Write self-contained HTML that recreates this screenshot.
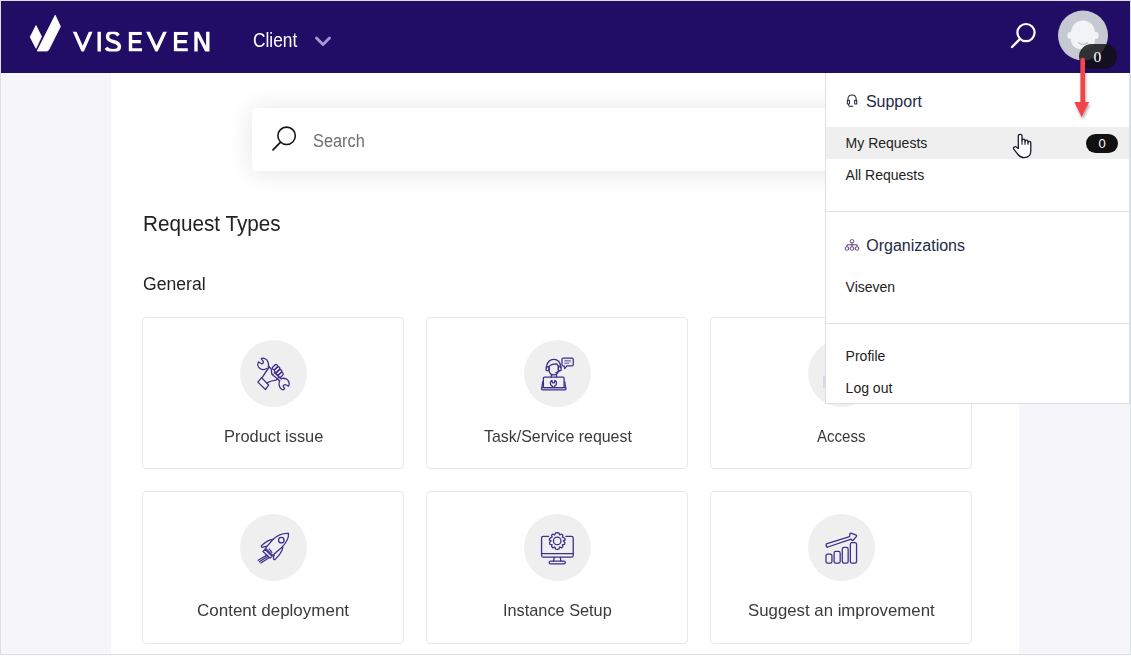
<!DOCTYPE html>
<html><head><meta charset="utf-8">
<style>
*{box-sizing:border-box;margin:0;padding:0}
html,body{width:1131px;height:657px;overflow:hidden;background:#fff;font-family:"Liberation Sans",sans-serif}
.a{position:absolute}
.t{position:absolute;white-space:nowrap;transform-origin:0 0}
#frame{position:absolute;left:0;top:0;width:1131px;height:655px;background:#f5f5fa;overflow:hidden}
#border{position:absolute;left:0;top:0;width:1131px;height:655px;border:1px solid #dcdfe4}
#header{position:absolute;left:1px;top:1px;width:1129px;height:72px;background:#210c66}
#main{position:absolute;left:111px;top:73px;width:908px;height:581px;background:#fff}
.card{position:absolute;width:262px;height:152px;border:1px solid #e8e8e8;border-radius:4px;background:#fff}
.circ{position:absolute;width:67px;height:67px;border-radius:50%;background:#efefef}
.ico{position:absolute;width:40px;height:40px}
.ico *{fill:none;stroke:#402e8c;stroke-width:21;stroke-linecap:round;stroke-linejoin:round}
.lbl{font-size:16.6px;line-height:16.6px;color:#3a3a3a}
.dt{font-size:14px;line-height:14px;color:#222}
.dh{font-size:16px;line-height:16px;color:#1e2a48}
#dd{position:absolute;left:825px;top:73px;width:305px;height:331px;background:#fff;border:1px solid #dddfe2;border-top:none}
.hr{position:absolute;left:826px;width:303px;height:1px;background:#e0e0e4}
</style></head>
<body>
<div id="frame">
  <div id="header"></div>
  <!-- logo -->
  <svg class="a" style="left:0;top:0" width="230" height="72" viewBox="0 0 230 72">
    <path d="M30.2 37 L36 25.6 L41.5 36.6 L36 48.3 Z" fill="#fff" stroke="#fff" stroke-width="0.8" stroke-linejoin="round"/>
    <path d="M37.2 51 L55.2 15.2 L60.4 26.5 L48.6 50 Q48 51 46.6 51 Z" fill="#fff" stroke="#fff" stroke-width="0.8" stroke-linejoin="round"/>
    <defs><clipPath id="lc"><rect x="60" y="31.7" width="160" height="19.9"/></clipPath></defs>
    <g fill="none" stroke="#fff" stroke-width="3.4" clip-path="url(#lc)" stroke-miterlimit="10">
      <path d="M72.6 27 L82.7 50 L92.8 27"/>
      <path d="M99.2 28 L99.2 55"/>
      <path d="M118.6 35.4 Q116 32.4 112.6 32.4 Q107.6 32.4 107.6 36.8 Q107.6 40.2 113 41.5 Q119.4 43 119.4 46.6 Q119.4 50.8 113 50.8 Q108.6 50.8 105.9 47.8"/>
      <path d="M141.8 33.4 L130.5 33.4 L130.5 49.9 L142 49.9 M130.5 41.6 L140.8 41.6"/>
      <path d="M145.8 27 L156.5 50 L167.2 27"/>
      <path d="M187.8 33.4 L175.6 33.4 L175.6 49.9 L187.8 49.9 M175.6 41.6 L186.8 41.6"/>
      <path d="M196 56 L196 30 L207.8 53 L207.8 28"/>
    </g>
  </svg>
  <div class="t" style="left:252.7px;top:31.2px;font-size:19.4px;line-height:19.4px;color:#fff;transform:scaleX(.893)">Client</div>
  <svg class="a" style="left:313px;top:33.6px" width="20" height="15" viewBox="0 0 20 15"><path d="M3.5 4 L10 10.5 L16.5 4" fill="none" stroke="#a398cf" stroke-width="3" stroke-linecap="round" stroke-linejoin="round"/></svg>
  <!-- search icon -->
  <svg class="a" style="left:1005px;top:17px" width="35" height="35" viewBox="0 0 35 35"><circle cx="21" cy="15.6" r="8.6" fill="none" stroke="#fff" stroke-width="2.2"/><path d="M15 22 L7 30" stroke="#fff" stroke-width="2.4" stroke-linecap="round"/></svg>
  <!-- avatar -->
  <svg class="a" style="left:1056px;top:9px" width="54" height="54" viewBox="0 0 54 54">
    <circle cx="27" cy="26.5" r="25" fill="#c6c9d2"/>
    <path d="M14.8 25 C14.8 16.5 20.2 11.4 27 11.4 C33.8 11.4 39.2 16.5 39.2 25 L39.2 30 C39.2 36.5 34 40.5 27 40.5 C20 40.5 14.8 36.5 14.8 30 Z" fill="#f2f3f6"/>
    <ellipse cx="14.2" cy="26.4" rx="2.8" ry="3.4" fill="#f2f3f6"/><ellipse cx="39.8" cy="26.4" rx="2.8" ry="3.4" fill="#f2f3f6"/>
    <path d="M22.6 33.6 Q27 37 31.6 33.6" fill="none" stroke="#c6c9d2" stroke-width="1.5" stroke-linecap="round"/>
  </svg>
  <div class="a" style="left:1079px;top:44px;width:38px;height:25px;border-radius:12.5px;background:rgba(16,16,18,0.82)"></div>
  <div class="t" style="left:1093.6px;top:48.6px;font-family:'Liberation Serif',serif;font-size:15.6px;line-height:16px;color:#fff">0</div>

  <div id="main"></div>
  <!-- search -->
  <div class="a" style="left:252px;top:108px;width:626px;height:63px;background:#fff;border-radius:4px;box-shadow:0 1px 26px rgba(0,0,0,0.11)"></div>
  <svg class="a" style="left:270px;top:124px" width="30" height="30" viewBox="0 0 30 30"><circle cx="16.6" cy="11.8" r="8.7" fill="none" stroke="#111" stroke-width="1.55"/><path d="M10.6 18.2 L3 25.8" stroke="#111" stroke-width="1.7" stroke-linecap="round"/></svg>
  <div class="t" style="left:312.6px;top:132px;font-size:18.9px;line-height:18.9px;color:#6e6e6e;transform:scaleX(.865)">Search</div>
  <div class="t" style="left:142.6px;top:213px;font-size:22.5px;line-height:22.5px;color:#222;transform:scaleX(.92)">Request Types</div>
  <div class="t" style="left:142.8px;top:275.2px;font-size:18.9px;line-height:18.9px;color:#222;transform:scaleX(.932)">General</div>

  <div class="card" style="left:142px;top:317px"></div>
  <div class="card" style="left:426px;top:317px"></div>
  <div class="card" style="left:710px;top:317px"></div>
  <div class="card" style="left:142px;top:491px;height:153px"></div>
  <div class="card" style="left:426px;top:491px;height:153px"></div>
  <div class="card" style="left:710px;top:491px;height:153px"></div>

  <div class="circ" style="left:240px;top:340px"></div>
  <div class="circ" style="left:524px;top:340px"></div>
  <div class="circ" style="left:808px;top:340px"></div>
  <div class="circ" style="left:240px;top:514px"></div>
  <div class="circ" style="left:524px;top:514px"></div>
  <div class="circ" style="left:808px;top:514px"></div>

  <!-- product issue icon -->
  <svg class="ico" style="left:253px;top:353px" viewBox="0 0 657 657">
    <path d="M250 235 C265 185 250 120 200 95 C175 82 150 85 135 92 L170 140 C175 160 160 180 140 178 L90 145 C70 185 80 235 120 258 C160 280 200 270 225 255"/>
    <path d="M310 348 L432 452 M348 322 L465 425"/>
    <path d="M440 450 C420 490 420 560 470 595 C490 610 510 600 520 590 L495 545 C500 525 525 515 545 525 L585 545 C605 500 590 445 545 425 C510 410 480 415 465 420"/>
    <g transform="translate(361 232) rotate(-45)"><rect x="-50" y="-26" width="100" height="52" rx="26"/></g>
    <g transform="translate(396 272) rotate(-45)"><rect x="-52" y="-26" width="104" height="52" rx="26"/></g>
    <g transform="translate(428 317) rotate(-45)"><rect x="-52" y="-26" width="104" height="52" rx="26"/></g>
    <g transform="translate(455 360) rotate(-45)"><rect x="-48" y="-26" width="96" height="52" rx="26"/></g>
    <path d="M268 230 L300 262 L306 330 Q310 352 330 350"/>
    <path d="M268 230 Q215 300 150 405"/>
    <path d="M230 490 Q300 452 380 446 L420 405"/>
    <path d="M140 405 L258 525 L205 600 L80 478 Z"/>
  </svg>
  <!-- task icon -->
  <svg class="ico" style="left:537px;top:353px" viewBox="0 0 657 657">
    <path d="M160 245 C150 150 220 105 275 105 C340 105 390 140 385 240"/>
    <path d="M200 220 C220 190 245 180 320 178 C335 185 345 200 350 215"/>
    <path d="M200 220 L200 300 C210 340 240 360 280 360 C310 360 340 335 350 300 L350 215"/>
    <rect x="150" y="225" width="45" height="65" rx="12"/>
    <rect x="352" y="222" width="45" height="68" rx="12"/>
    <path d="M372 290 C360 310 340 320 310 322"/>
    <path d="M235 355 L235 395 M320 350 L320 395"/>
    <rect x="105" y="398" width="340" height="170" rx="16"/>
    <rect x="75" y="568" width="400" height="36" rx="14"/>
    <path d="M245 450 C210 470 210 525 248 540 L252 562 L288 562 L292 540 C330 525 330 470 295 450 L285 490 L255 490 Z"/>
    <path d="M95 470 L80 568 M455 470 L470 568"/>
    <path d="M430 85 L575 85 Q595 85 595 105 L595 190 Q595 210 575 210 L490 210 L455 255 L445 210 L430 210 Q410 210 410 190 L410 105 Q410 85 430 85 Z"/>
    <path style="stroke-width:10" d="M455 122 L550 122 M455 147 L550 147 M455 172 L520 172"/>
  </svg>
  <!-- rocket icon -->
  <svg class="ico" style="left:253px;top:528px" viewBox="0 0 657 657">
    <path d="M583 88 C500 80 400 120 330 185 L205 330 L320 450 L470 320 C540 250 590 170 583 88 Z"/>
    <circle cx="465" cy="200" r="45"/>
    <path d="M330 185 C260 190 190 240 140 290 C130 305 145 320 165 315 L220 300"/>
    <path d="M490 318 C480 390 420 460 365 515 C350 525 335 515 335 495 L348 440"/>
    <path d="M195 350 L315 465 L280 495 L165 385 Z"/>
    <path d="M230 445 L85 530 M250 465 L105 555 M270 485 L130 575"/>
    <path d="M265 345 L268 350 M282 362 L310 402"/>
  </svg>
  <!-- instance icon -->
  <svg class="ico" style="left:537px;top:528px" viewBox="0 0 657 657">
    <path d="M190 138 L105 138 Q75 138 75 168 L75 450 Q75 480 105 480 L565 480 Q595 480 595 450 L595 168 Q595 138 565 138 L475 138"/>
    <path d="M75 420 L595 420"/>
    <path d="M282 482 L272 545 M383 482 L393 545"/>
    <rect x="200" y="543" width="265" height="46" rx="23"/>
    <circle cx="332" cy="212" r="62"/>
    <path d="M332 75 L360 80 L372 112 L405 100 L425 120 L418 152 L458 170 L460 200 L432 212 L458 240 L452 270 L418 272 L425 305 L405 325 L372 312 L360 345 L332 350 L305 345 L292 312 L260 325 L240 305 L247 272 L212 270 L205 240 L232 212 L205 200 L207 170 L247 152 L240 120 L260 100 L292 112 L305 80 Z"/>
  </svg>
  <!-- suggest icon -->
  <svg class="ico" style="left:821px;top:528px" viewBox="0 0 657 657">
    <rect x="82" y="428" width="98" height="150" rx="28"/>
    <rect x="215" y="385" width="100" height="193" rx="28"/>
    <rect x="350" y="320" width="96" height="258" rx="28"/>
    <rect x="482" y="240" width="102" height="338" rx="28"/>
    <path d="M105 318 Q78 310 88 262 L470 140 L475 90 Q480 82 490 85 L580 118 Q590 126 582 138 L525 205 Q515 212 508 200 L496 183 L112 312"/>
  </svg>
  <!-- access icon sliver -->
  <div class="a" style="left:823px;top:376px;width:2px;height:12px;background:#d9d5e6"></div>

  <!-- label texts -->
  <div class="t lbl" style="left:223.8px;top:429.4px;transform:scaleX(.988)">Product issue</div>
  <div class="t lbl" style="left:484.4px;top:429.4px;transform:scaleX(.96)">Task/Service request</div>
  <div class="t lbl" style="left:817.3px;top:429.4px;transform:scaleX(.908)">Access</div>
  <div class="t lbl" style="left:196.9px;top:603.2px;transform:scaleX(1.024)">Content deployment</div>
  <div class="t lbl" style="left:502.9px;top:603.2px;transform:scaleX(.982)">Instance Setup</div>
  <div class="t lbl" style="left:748.2px;top:603.2px;transform:scaleX(1.012)">Suggest an improvement</div>

  <!-- dropdown -->
  <div id="dd"></div>
  <svg class="a" style="left:842px;top:92px" width="20" height="20" viewBox="0 0 657 657">
    <g fill="none" stroke="#1e2a48" stroke-width="34">
    <path d="M195 300 L195 240 C195 150 255 100 330 100 C405 100 465 150 465 240 L465 300"/>
    <rect x="175" y="270" width="70" height="125" rx="10"/>
    <rect x="415" y="270" width="70" height="125" rx="10"/>
    <path d="M210 400 L225 455 Q235 470 260 470 L370 470"/>
    </g>
  </svg>
  <div class="t dh" style="left:865.9px;top:93.8px">Support</div>
  <div class="a" style="left:826px;top:127px;width:303px;height:32px;background:#efefef"></div>
  <div class="t dt" style="left:845.6px;top:135.9px">My Requests</div>
  <div class="a" style="left:1086px;top:134px;width:32px;height:19px;border-radius:9.5px;background:#111"></div>
  <div class="t" style="left:1098.5px;top:137px;font-size:13px;line-height:13px;color:#fff">0</div>
  <div class="t dt" style="left:845.6px;top:167.9px">All Requests</div>
  <div class="hr" style="top:211px"></div>
  <svg class="a" style="left:842px;top:235px" width="20" height="20" viewBox="0 0 657 657">
    <g fill="none" stroke="#5b3a78" stroke-width="32">
    <rect x="270" y="155" width="115" height="100" rx="35"/>
    <rect x="105" y="390" width="115" height="105" rx="35"/>
    <rect x="270" y="390" width="115" height="105" rx="35"/>
    <rect x="435" y="390" width="115" height="105" rx="35"/>
    <path d="M328 255 L328 390 M165 390 L165 322 L495 322 L495 390"/>
    </g>
  </svg>
  <div class="t dh" style="left:866.3px;top:238.2px">Organizations</div>
  <div class="t dt" style="left:845.6px;top:279.9px">Viseven</div>
  <div class="hr" style="top:323px"></div>
  <div class="t dt" style="left:845.6px;top:348.9px">Profile</div>
  <div class="t dt" style="left:845.6px;top:380.9px">Log out</div>

  <!-- cursor -->
  <svg class="a" style="left:1008px;top:128px" width="30" height="34" viewBox="0 0 30 34">
    <path d="M10.3 20.5 L10.3 8.2 Q10.3 6.3 12.15 6.3 Q14 6.3 14 8.2 L14 12.8 Q14 11.2 15.5 11.2 Q17 11.2 17 12.8 L17 13.8 Q17 12.2 18.5 12.2 Q20 12.2 20 13.8 L20 14.8 Q20 13.3 21.4 13.3 Q22.8 13.3 22.8 14.8 L22.8 23 Q22.8 29.6 16 29.6 Q12.5 29.6 10 26.5 L5.8 21.2 Q5 20 6.2 19 Q7.6 18.2 8.8 19.5 Z" fill="#fff" stroke="#1b1b2b" stroke-width="1.3" stroke-linejoin="round"/>
    <path d="M14 12.5 L14 16.8 M17 13.5 L17 16.8 M20 14.5 L20 16.8" stroke="#1b1b2b" stroke-width="1.1"/>
  </svg>

  <!-- red arrow -->
  <svg class="a" style="left:1066px;top:52px" width="36" height="72" viewBox="0 0 36 72">
    <defs><filter id="sh" x="-50%" y="-20%" width="200%" height="150%"><feGaussianBlur in="SourceAlpha" stdDeviation="1.5"/><feOffset dx="0.5" dy="1.5"/><feComponentTransfer><feFuncA type="linear" slope="0.35"/></feComponentTransfer><feMerge><feMergeNode/><feMergeNode in="SourceGraphic"/></feMerge></filter></defs>
    <g filter="url(#sh)">
    <path d="M16.7 8 L16.7 52" stroke="#f2444b" stroke-width="4.6" stroke-linecap="round"/>
    <path d="M8.3 50 L23.1 50 L15.7 65.3 Z" fill="#f2444b"/>
    </g>
  </svg>
  <div id="border"></div>
</div>
</body></html>
